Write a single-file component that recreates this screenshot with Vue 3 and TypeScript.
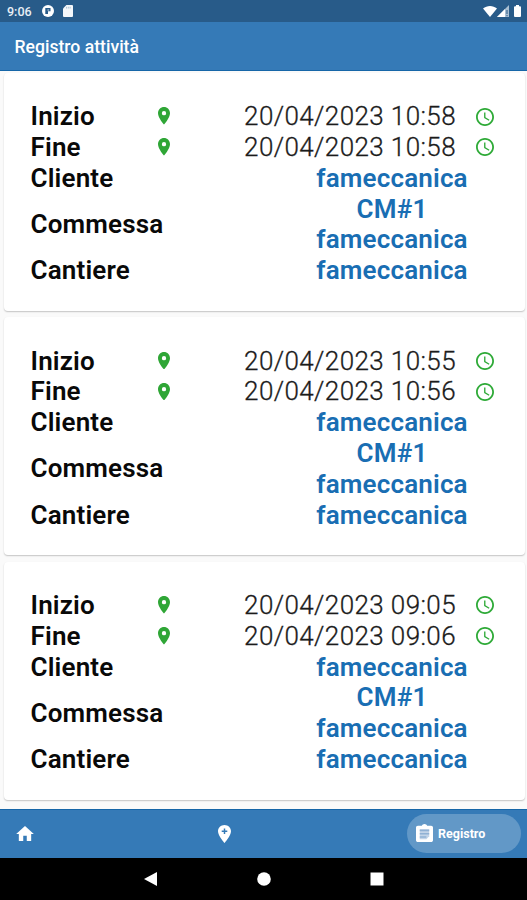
<script setup lang="ts">
interface Activity {
  start: string
  end: string
  client: string
  orderCode: string
  orderName: string
  site: string
}

const company = 'fameccanica'
const activities: Activity[] = [
  { start: '20/04/2023 10:58', end: '20/04/2023 10:58', client: company, orderCode: 'CM#1', orderName: company, site: company },
  { start: '20/04/2023 10:55', end: '20/04/2023 10:56', client: company, orderCode: 'CM#1', orderName: company, site: company },
  { start: '20/04/2023 09:05', end: '20/04/2023 09:06', client: company, orderCode: 'CM#1', orderName: company, site: company },
]

const times = (a: Activity) => [
  { label: 'Inizio', value: a.start },
  { label: 'Fine', value: a.end },
]
</script>

<template>
  <div class="screen">
    <div class="status">
      <span class="clock">9:06</span>
      <svg class="st-app" viewBox="0 0 12 12"><circle cx="6" cy="6" r="6" fill="#fff" /><path d="M3.300 3h5.200v3.200H6V9H3.300z" fill="#285b89" /><path d="M5.400 4.600h1.800v.8H5.400z" fill="#fff" /></svg>
      <svg class="st-sd" viewBox="0 0 10 12"><path d="M3.400 0H9a1 1 0 0 1 1 1v10a1 1 0 0 1-1 1H1a1 1 0 0 1-1-1V3.400z" fill="#f4f7fa" /><path d="M3.500 1.800v1.700M5.300 1.800v1.700M7.100 1.800v1.700" stroke="#9db4c9" stroke-width=".8" /></svg>
      <span class="grow"></span>
      <svg class="st-wifi" viewBox="0 0 14 11"><path d="M7 11 0 2.600C4-.8 10-.8 14 2.600z" fill="#fff" /></svg>
      <svg class="st-cell" viewBox="0 0 12 12"><path d="M12 0v12H0z" fill="#a9bfd2" /><path d="M8 4v8H0z" fill="#fff" /><path d="M10 5v4M10 10v1.200" stroke="#285b89" stroke-width="1" /></svg>
      <svg class="st-batt" viewBox="0 0 7 12"><path d="M2 0h3v1.200h1a1 1 0 0 1 1 1V11a1 1 0 0 1-1 1H1a1 1 0 0 1-1-1V2.200a1 1 0 0 1 1-1h1z" fill="#fff" /></svg>
    </div>

    <header class="appbar">Registro attività</header>

    <main class="list">
      <section v-for="(a, i) in activities" :key="i" class="card">
        <div v-for="t in times(a)" :key="t.label" class="row">
          <span class="label">{{ t.label }}</span>
          <svg class="pin" viewBox="5 2 14 20" preserveAspectRatio="none"><path d="M12 2C8.130 2 5 5.130 5 9c0 5.250 7 13 7 13s7-7.750 7-13c0-3.870-3.130-7-7-7zm0 9.500a2.500 2.500 0 0 1 0-5 2.500 2.500 0 0 1 0 5z" /></svg>
          <span class="time">{{ t.value }}</span>
          <svg class="watch" viewBox="2 2 20 20"><path d="M11.990 2C6.470 2 2 6.480 2 12s4.470 10 9.990 10C17.520 22 22 17.520 22 12S17.520 2 11.990 2zM12 20c-4.420 0-8-3.580-8-8s3.580-8 8-8 8 3.580 8 8-3.580 8-8 8zm.5-13H11v6l5.250 3.150.75-1.230-4.500-2.670z" /></svg>
        </div>
        <div class="row"><span class="label">Cliente</span><span class="value">{{ a.client }}</span></div>
        <div class="row"><span class="label">Commessa</span><span class="value">{{ a.orderCode }}<br>{{ a.orderName }}</span></div>
        <div class="row"><span class="label">Cantiere</span><span class="value">{{ a.site }}</span></div>
      </section>
    </main>

    <nav class="tabs">
      <svg class="home" viewBox="2 3 20 17"><path d="M10 20v-6h4v6h5v-8h3L12 3 2 12h3v8z" /></svg>
      <svg class="place" viewBox="5 2 14 20" preserveAspectRatio="none"><path d="M12 2C8.140 2 5 5.140 5 9c0 5.250 7 13 7 13s7-7.750 7-13c0-3.860-3.140-7-7-7zm3 7.700h-2.200v2.200h-1.600V9.700H9V8.200h2.200V6h1.600v2.200H15z" /></svg>
      <div class="active">
        <svg class="clip" viewBox="3 1 18 20" preserveAspectRatio="none"><path d="M19 3h-4.180C14.400 1.840 13.300 1 12 1s-2.400.84-2.820 2H5c-1.100 0-2 .9-2 2v14c0 1.100.9 2 2 2h14c1.100 0 2-.9 2-2V5c0-1.100-.9-2-2-2z" fill="#fff" /><path d="M7 6.500h10v8L14 18H7z" fill="#c3d4e8" /><path d="M7 7.500h10v1.600H7zm0 3.600h10v1.600H7zm0 3.600h7v1.600H7z" fill="#90b1d4" /></svg>
        <span>Registro</span>
      </div>
    </nav>

    <div class="system">
      <svg viewBox="0 0 14 14"><path d="M13 0v14L0 7z" /></svg>
      <svg viewBox="0 0 14 14"><circle cx="7" cy="7" r="6.800" /></svg>
      <svg viewBox="0 0 14 14"><path d="M.5.5h13v13H.5z" /></svg>
    </div>
  </div>
</template>

<style>
body {
  margin: 0;
}
</style>

<style scoped>
.screen {
  width: 527px;
  height: 900px;
  display: flex;
  flex-direction: column;
  overflow: hidden;
  background: #fafafa;
  font-family: Roboto, sans-serif;
}
svg {
  display: block;
  flex: none;
}
.status {
  height: 22px;
  box-sizing: border-box;
  flex: none;
  display: flex;
  align-items: center;
  padding: 0 6px 0 7px;
  background: #285b89;
  color: #e8eff5;
}
.clock {
  width: 35px;
  font-size: 12.500px;
  font-weight: 500;
}
.grow {
  flex: 1;
}
.st-app { width: 12px; height: 12px; margin-right: 9px; }
.st-sd { width: 10px; height: 12px; }
.st-wifi { width: 14px; height: 11px; }
.st-cell { width: 12px; height: 12px; margin: 0 5px 0 0; }
.st-batt { width: 7px; height: 12px; }
.appbar {
  height: 49px;
  flex: none;
  box-sizing: border-box;
  padding-left: 14.500px;
  border-bottom: 1px solid #1666a8;
  background: #357ab7;
  color: #fff;
  font-size: 17.600px;
  font-weight: 500;
  line-height: 50px;
}
.list {
  flex: 1;
  display: flex;
  flex-direction: column;
  gap: 6.400px;
  padding: 2px 2.500px 0 4px;
}
.card {
  height: 238px;
  flex: none;
  box-sizing: border-box;
  padding: 28.300px 27.500px 0 26.500px;
  border-radius: 4px;
  background: #fff;
  box-shadow: 0 1px 1.500px rgba(0, 0, 0, 0.22);
}
.row {
  display: flex;
  align-items: center;
  font-size: 26px;
  line-height: 30.800px;
}
.label {
  width: 127px;
  flex: none;
  color: #090909;
  font-weight: 600;
  letter-spacing: 0.170px;
}
.pin {
  width: 12px;
  height: 17.500px;
  margin-bottom: 1px;
  fill: #2fa636;
}
.time {
  flex: 1;
  padding-right: 20px;
  text-align: right;
  color: #1b1b1b;
  font-weight: 300;
  letter-spacing: 0.400px;
  -webkit-text-stroke: 0.300px #1b1b1b;
}
.watch {
  width: 18px;
  height: 18px;
  margin-right: 3px;
  fill: #2eaa37;
}
.value {
  width: 152px;
  margin-left: 158.500px;
  text-align: center;
  color: #196eb3;
  font-weight: 600;
  letter-spacing: 0.170px;
}
.tabs {
  height: 49px;
  flex: none;
  box-sizing: border-box;
  display: flex;
  align-items: center;
  padding: 0 6px 0 16px;
  border-top: 1px solid #1666a8;
  background: #357ab7;
  fill: #fff;
}
.home { width: 18px; height: 15px; margin-bottom: 1px; }
.place { width: 13px; height: 18px; margin-left: 184px; margin-bottom: 1px; }
.active {
  width: 114px;
  height: 39px;
  box-sizing: border-box;
  margin-left: auto;
  margin-bottom: 1px;
  display: flex;
  align-items: center;
  gap: 5px;
  padding-left: 9px;
  border-radius: 20px;
  background: #6298c7;
  color: #fff;
  font-size: 12.500px;
  font-weight: 700;
}
.clip { width: 17px; height: 18px; margin-bottom: 1px; }
.system {
  height: 42px;
  flex: none;
  box-sizing: border-box;
  display: flex;
  justify-content: center;
  align-items: center;
  gap: 99px;
  background: #000;
  fill: #fff;
}
.system svg { width: 14px; height: 14px; }
</style>
